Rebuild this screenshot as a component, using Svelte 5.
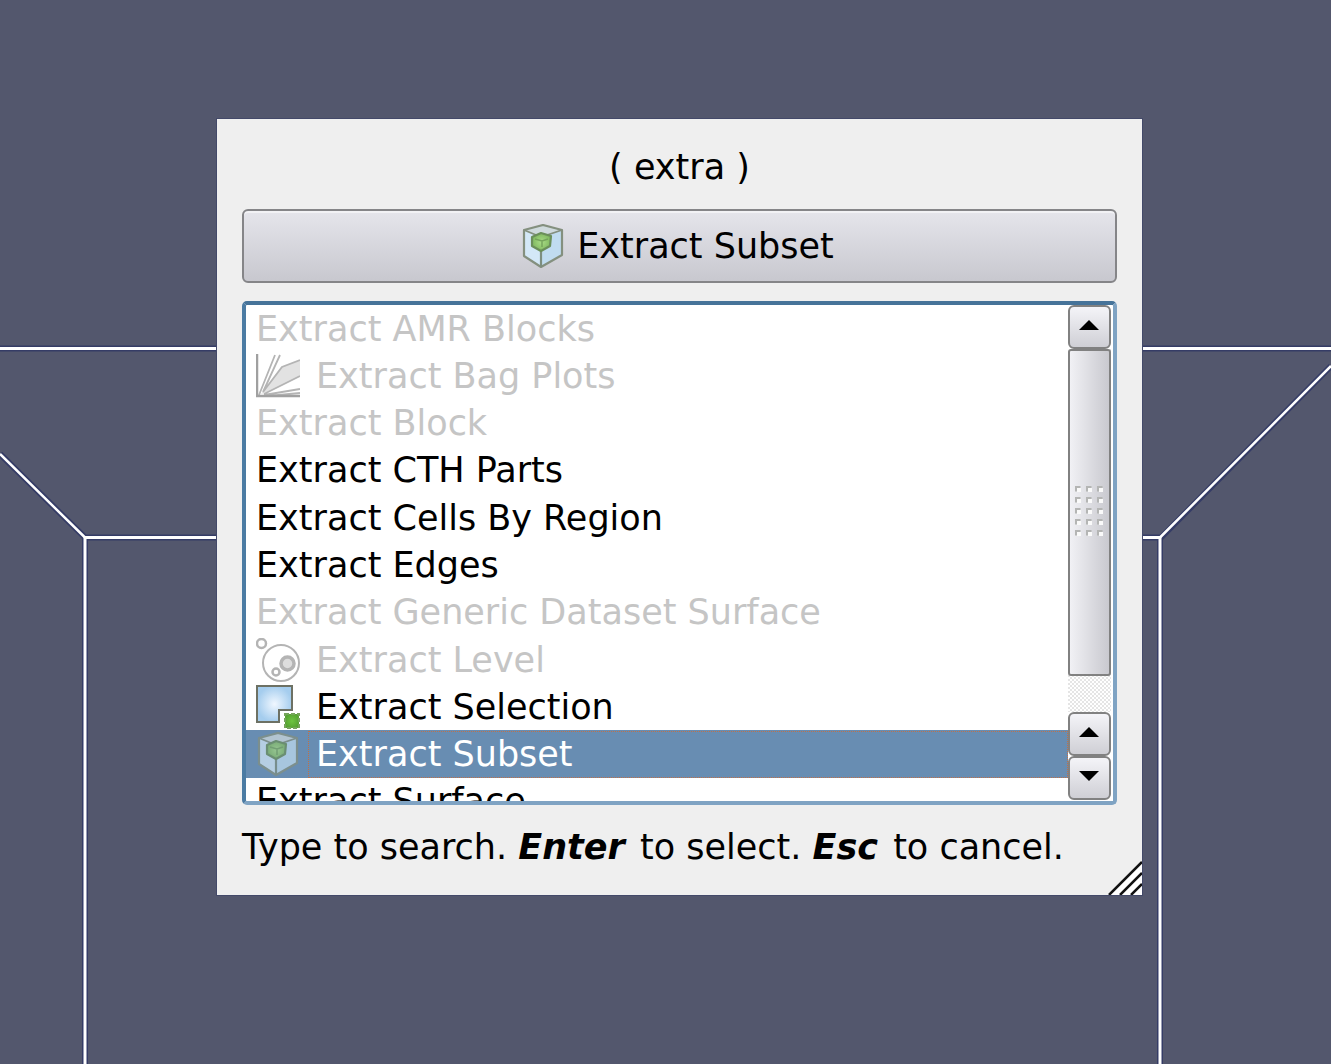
<script>
  const items = [
    { name: 'Extract AMR Blocks', disabled: true },
    { name: 'Extract Bag Plots', disabled: true, icon: 'bag' },
    { name: 'Extract Block', disabled: true },
    { name: 'Extract CTH Parts' },
    { name: 'Extract Cells By Region' },
    { name: 'Extract Edges' },
    { name: 'Extract Generic Dataset Surface', disabled: true },
    { name: 'Extract Level', disabled: true, icon: 'level' },
    { name: 'Extract Selection', icon: 'selection' },
    { name: 'Extract Subset', icon: 'subset' },
    { name: 'Extract Surface' }
  ];
  let selected = $state('Extract Subset');
</script>

{#snippet icon(kind)}
  <svg class="icon" class:tinted={kind === 'subset'} viewBox="0 0 44 44" aria-hidden="true">
    {#if kind === 'bag'}
      <path d="M5 40 25 13 44 6v16L12 38z" fill="#e2e2e2" />
      <path d="M3 41 19 1M7 38 24 1M7 38 26 13 44 6M8 40l36-18M8 41l36-6M12 42l32-3" fill="none" stroke="#b4b4b4" stroke-width="1.8" />
      <path d="M1 0v42H44" fill="none" stroke="#a0a0a0" stroke-width="2.500" />
    {:else if kind === 'level'}
      <g fill="none" stroke="#b4b4b4">
        <circle cx="5.500" cy="5.500" r="4.500" stroke-width="2.500" />
        <circle cx="25" cy="25" r="18" stroke-width="2" />
        <circle cx="31.500" cy="25.500" r="6.500" fill="#ddd" stroke-width="3.500" />
        <circle cx="20" cy="34" r="3.500" stroke-width="2.500" />
      </g>
    {:else if kind === 'selection'}
      <path d="M1 1h35v24H23v12H1z" fill="url(#paper)" stroke="#6d7164" stroke-width="2" />
      <path d="M29 29h14v14H29z" fill="url(#leaf)" stroke="#76a45c" stroke-width="2" stroke-dasharray="4 2" />
    {:else}
      <path d="M3 6 22 1l19 5v25L20 43 3 32z" fill="#c0dcf0" />
      <path d="m3 6 17 7v30L3 32z" fill="#d3e8f7" />
      <path d="M3 6 22 1l19 5-21 7z" fill="#cfdadd" />
      <path d="M3 6 22 1l19 5v25L20 43 3 32z" fill="none" stroke="#84907f" stroke-width="2.200" stroke-linejoin="round" />
      <path d="m3 6 17 7 21-7" fill="none" stroke="#84907f" stroke-width="1.800" />
      <path d="M20 26v17" stroke="#7d8e7f" stroke-width="2.200" />
      <path d="m11 13 9-4 10 3-1 10-9 5-9-5z" fill="url(#core)" stroke="#6b8f5a" stroke-width="2.200" stroke-linejoin="round" />
      <path d="m14 15 7 2 6-2M21 17v6" fill="none" stroke="#76a55c" stroke-width="1.500" />
    {/if}
  </svg>
{/snippet}

{#snippet arrow(down)}
  <svg class="arrow" viewBox="0 0 20 12" aria-hidden="true">
    <path d={down ? 'M0 1h20L10 11z' : 'M0 11h20L10 1z'} />
  </svg>
{/snippet}

<svg class="defs" width="0" height="0" aria-hidden="true">
  <defs>
    <radialGradient id="paper"><stop stop-color="#f0f7ff" /><stop offset="1" stop-color="#a5cdee" /></radialGradient>
    <radialGradient id="leaf"><stop stop-color="#6ec440" /><stop offset="1" stop-color="#57a532" /></radialGradient>
    <radialGradient id="core"><stop stop-color="#a9dc86" /><stop offset="1" stop-color="#80b860" /></radialGradient>
  </defs>
</svg>

<main>
  <svg class="scene" viewBox="0 0 1331 1064" preserveAspectRatio="xMidYMin slice" aria-hidden="true">
    <g fill="none" stroke="#353c66" stroke-width="6"><path d="M0 348.500h1331M0 454l85 83.500h1076L1331 366M85 537.500V1064M1160 537.500V1064" /></g>
    <g fill="none" stroke="#fff" stroke-width="3"><path d="M0 348.500h1331M85 1064V537.500h1075V1064" /><path d="m0 454 85 83.500M1160 537.500 1331 366" stroke-width="2.500" /></g>
  </svg>

  <section class="dialog" aria-label="Quick launch">
    <p class="query">( extra )</p>
    <button class="launch">{@render icon('subset')}{selected}</button>

    <div class="frame">
      <div class="viewport">
        <ul role="listbox" aria-label="Filters">
          {#each items as item}
            <li role="option" aria-selected={item.name === selected} aria-disabled={item.disabled ?? false}>
              {#if item.icon}{@render icon(item.icon)}{/if}
              <span class="name">{item.name}</span>
            </li>
          {/each}
        </ul>
      </div>
      <div class="scrollbar">
        <button class="step" aria-label="Scroll up">{@render arrow(false)}</button>
        <div class="track">
          <div class="thumb">
            <svg class="grip" viewBox="0 0 30 52" aria-hidden="true">
              {#each [0, 1, 2, 3, 4] as row}
                {#each [0, 1, 2] as col}
                  <g transform="translate({col * 11} {row * 11})">
                    <rect x="2" y="2" width="4" height="4" fill="#fafafa" />
                    <path d="M1 5.500V1h4.500" fill="none" stroke="#b4b5b4" stroke-width="2" />
                  </g>
                {/each}
              {/each}
            </svg>
          </div>
        </div>
        <button class="step" aria-label="Page up">{@render arrow(false)}</button>
        <button class="step" aria-label="Scroll down">{@render arrow(true)}</button>
      </div>
    </div>

    <p class="hint">Type to search. <b>Enter</b> to select. <b>Esc</b> to cancel.</p>
    <svg class="resize" viewBox="0 0 34 34" aria-hidden="true">
      <path d="M1 34 34 1v33z" fill="#fff" />
      <path d="M1 34 34 1M12 34l22-22M23 34l11-11" stroke="#111" stroke-width="2.500" />
    </svg>
  </section>
</main>

<style>
  :global(body) { margin: 0; background: #53576d; }
  * { box-sizing: border-box; }
  main {
    position: relative;
    min-height: 100vh;
    padding: 119px 189px 48px 217px;
    overflow: hidden;
    background: #53576d;
    font: 35px/48px "DejaVu Sans", sans-serif;
    color: #000;
  }
  .defs { position: absolute; }
  .scene { position: absolute; inset: 0; width: 100%; height: 100%; }
  .dialog {
    position: relative;
    display: flex;
    flex-direction: column;
    padding: 24px 25px;
    background: #efefef;
    box-shadow: 0 0 0 1px #434969;
  }
  p { margin: 0; white-space: nowrap; }
  .query { text-align: center; }
  button { font: inherit; color: inherit; padding: 0; }
  .launch {
    display: flex;
    align-items: center;
    justify-content: center;
    gap: 12px;
    height: 74px;
    margin-top: 18px;
    padding-right: 4px;
    border: 2px solid #858588;
    border-radius: 6px;
    background: linear-gradient(#e5e5eb, #c8c8cf);
    box-shadow: inset 0 2px #f2f2f5;
  }
  .icon { flex: none; width: 44px; height: 44px; }
  .frame {
    display: flex;
    height: 504px;
    margin-top: 18px;
    border: 4px solid #7fa3c3;
    border-top-color: #467399;
    border-left-color: #4b7ba3;
    border-radius: 5px;
    background: #fff;
  }
  .viewport { flex: 1; min-width: 0; overflow: hidden; }
  ul {
    display: grid;
    grid-template-rows: repeat(11, 1fr);
    height: 520px;
    margin: 0;
    padding: 0;
    list-style: none;
  }
  li {
    display: flex;
    align-items: center;
    gap: 16px;
    padding-left: 10px;
    line-height: 46px;
    white-space: nowrap;
  }
  li[aria-disabled='true'] { color: #c5c5c5; }
  li[aria-selected='true'] { background: #688db2; color: #fff; }
  li[aria-selected='true'] .name {
    flex: 1;
    margin-left: -8px;
    padding-left: 7px;
    border: 1px dotted #c07048;
    line-height: 45px;
  }
  li .tinted { opacity: 0.72; }
  .scrollbar { display: flex; flex-direction: column; width: 45px; padding-bottom: 1px; }
  .step {
    display: grid;
    place-items: center;
    flex: none;
    width: 43px;
    height: 44px;
    padding: 0 2px 4px 0;
    border: 2px solid #818181;
    border-radius: 6px;
    background: linear-gradient(#f4f4f8, #cfcfd5);
  }
  .arrow { width: 20px; height: 12px; }
  .track {
    flex: 1;
    width: 43px;
    background: repeating-conic-gradient(#e5e5e5 0 25%, #fff 0 50%) 0 0 / 4px 4px;
  }
  .thumb {
    display: grid;
    place-items: center;
    height: 90%;
    border: 2px solid #818181;
    border-radius: 3px;
    background: linear-gradient(90deg, #f1f1f5, #c9c9cf);
  }
  .grip { width: 30px; height: 52px; }
  .hint { margin-top: 18px; }
  .hint b { margin-right: 4px; font-style: oblique; }
  .resize { position: absolute; right: 0; bottom: 0; width: 34px; height: 34px; }
</style>
